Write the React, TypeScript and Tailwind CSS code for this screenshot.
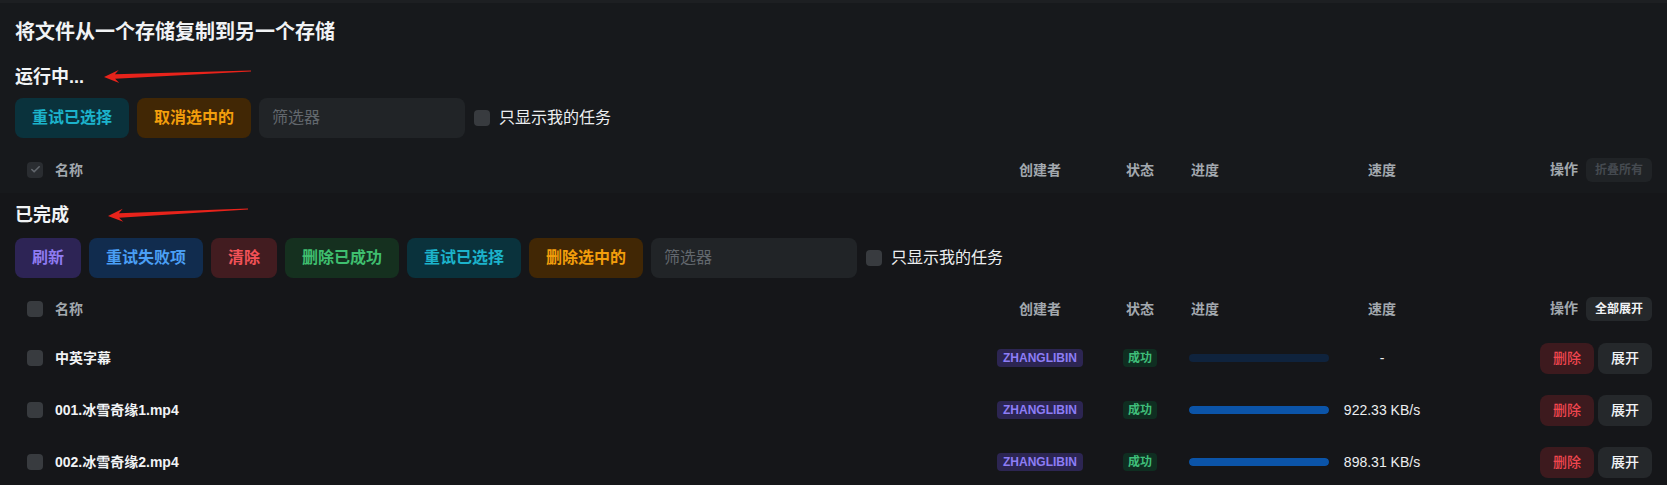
import { Check } from 'lucide-react';

type Tone = 'teal' | 'orange' | 'violet' | 'blue' | 'red' | 'green';

const tones: Record<Tone, string> = {
  teal: 'bg-[#0a323c] text-[#1cb3cb]',
  orange: 'bg-[#412705] text-[#f29e0c]',
  violet: 'bg-[#2d2455] text-[#8f7bf2]',
  blue: 'bg-[#112c4e] text-[#4a9ff5]',
  red: 'bg-[#421c20] text-[#f15257]',
  green: 'bg-[#15301f] text-[#3fbf6f]',
};

const ActionButton = ({ label, tone }: { label: string; tone: Tone }) => (
  <button className={`h-10 px-[17px] rounded-lg text-base font-semibold whitespace-nowrap ${tones[tone]}`}>
    {label}
  </button>
);

const Toolbar = ({ buttons }: { buttons: { label: string; tone: Tone }[] }) => (
  <div className="flex items-center gap-2">
    {buttons.map((b) => (
      <ActionButton key={b.label} label={b.label} tone={b.tone} />
    ))}
    <input
      placeholder="筛选器"
      className="w-[206px] h-10 rounded-lg bg-[#212427] px-[13px] text-base text-white outline-none placeholder:text-[#62676d]"
    />
    <label className="flex items-center gap-[9px] ml-px">
      <span className="w-4 h-4 rounded-[4px] bg-[#383b3f]" />
      <span className="text-base text-[#eceef0]">只显示我的任务</span>
    </label>
  </div>
);

const cols = 'grid grid-cols-[40px_1fr_112px_88px_150px_96px_222px] items-center';

const Box = ({ checked, dim }: { checked?: boolean; dim?: boolean }) => (
  <span
    className={`w-4 h-4 rounded-[4px] flex items-center justify-center ${dim ? 'bg-[#2a2d31]' : 'bg-[#383b3f]'}`}
  >
    {checked && <Check size={11} strokeWidth={3.5} className="text-[#62676d]" />}
  </span>
);

const HeaderRow = ({ running }: { running?: boolean }) => (
  <div className={`${cols} h-[47px] text-sm font-bold text-[#a2a8ae]`}>
    <div className="pl-3">
      <Box checked={running} dim={running} />
    </div>
    <div>名称</div>
    <div className="text-center">创建者</div>
    <div className="text-center">状态</div>
    <div className="pl-[7px]">进度</div>
    <div className="text-center">速度</div>
    <div className="flex items-center justify-end gap-2">
      <span className="-mt-0.5">操作</span>
      {running ? (
        <button className="h-6 px-[9px] rounded-md bg-[#202326] text-xs text-[#454a50]">折叠所有</button>
      ) : (
        <button className="h-6 px-[9px] rounded-md bg-[#25282b] text-xs font-bold text-[#f1f3f5]">全部展开</button>
      )}
    </div>
  </div>
);

type Task = { name: string; progress: number; speed: string };

const tasks: Task[] = [
  { name: '中英字幕', progress: 0, speed: '-' },
  { name: '001.冰雪奇缘1.mp4', progress: 100, speed: '922.33 KB/s' },
  { name: '002.冰雪奇缘2.mp4', progress: 100, speed: '898.31 KB/s' },
];

const TaskRow = ({ task }: { task: Task }) => (
  <div className={`${cols} h-[52px]`}>
    <div className="pl-3">
      <Box />
    </div>
    <div className="text-sm font-bold text-[#f1f3f5]">{task.name}</div>
    <div className="flex justify-center">
      <span className="h-[18px] px-1.5 rounded-[4px] bg-[#2c2552] text-xs font-bold leading-[18px] text-[#8d7df6]">
        ZHANGLIBIN
      </span>
    </div>
    <div className="flex justify-center">
      <span className="h-[18px] px-[5px] rounded-[4px] bg-[#0f2e21] text-xs font-bold leading-[18px] text-[#3fbf7a]">
        成功
      </span>
    </div>
    <div className="pl-[5px]">
      <div className="w-[140px] h-2 rounded-full bg-[#0f233d] overflow-hidden">
        <div className="h-full rounded-full bg-[#0b54a8]" style={{ width: `${task.progress}%` }} />
      </div>
    </div>
    <div className="text-center text-sm text-[#eceef0]">{task.speed}</div>
    <div className="flex justify-end gap-1">
      <button className="h-[31px] w-[54px] rounded-lg bg-[#3d1a1e] text-sm font-medium text-[#f0464f]">删除</button>
      <button className="h-[31px] w-[54px] rounded-lg bg-[#25282b] text-sm font-medium text-[#f1f3f5]">展开</button>
    </div>
  </div>
);

type Pt = [number, number];

const arrow = (tip: Pt, tail: Pt) => {
  const dx = tail[0] - tip[0];
  const dy = tail[1] - tip[1];
  const len = Math.hypot(dx, dy);
  const u: Pt = [dx / len, dy / len];
  const n: Pt = [-u[1], u[0]];
  const at = (d: number, w: number): string =>
    `${tip[0] + u[0] * d + n[0] * w},${tip[1] + u[1] * d + n[1] * w}`;
  return [at(0, 0), at(15, 6.5), at(11, 2.2), at(len, 0.4), at(len, -0.4), at(11, -2.2), at(15, -6.5)].join(' ');
};

export default function App() {
  return (
    <div className="relative min-h-screen bg-[#151619] font-['Liberation_Sans','Noto_Sans_CJK_SC',sans-serif]">
      <div className="h-[3px] bg-[#1d1f22]" />
      <div className="bg-[#17191c] px-[15px] pt-[15px]">
        <h1 className="text-[20px] leading-7 font-bold text-[#f1f3f5]">将文件从一个存储复制到另一个存储</h1>
        <h2 className="mt-[17px] text-lg leading-7 font-bold text-[#f1f3f5]">运行中...</h2>
        <div className="mt-[7px]">
          <Toolbar
            buttons={[
              { label: '重试已选择', tone: 'teal' },
              { label: '取消选中的', tone: 'orange' },
            ]}
          />
        </div>
        <div className="mt-2">
          <HeaderRow running />
        </div>
      </div>
      <div className="px-[15px] pt-2">
        <h2 className="text-lg leading-7 font-bold text-[#f1f3f5]">已完成</h2>
        <div className="mt-[9px]">
          <Toolbar
            buttons={[
              { label: '刷新', tone: 'violet' },
              { label: '重试失败项', tone: 'blue' },
              { label: '清除', tone: 'red' },
              { label: '删除已成功', tone: 'green' },
              { label: '重试已选择', tone: 'teal' },
              { label: '删除选中的', tone: 'orange' },
            ]}
          />
        </div>
        <div className="mt-[7px]">
          <HeaderRow />
          {tasks.map((t) => (
            <TaskRow key={t.name} task={t} />
          ))}
        </div>
      </div>
      <svg className="absolute left-0 top-0 pointer-events-none" width={1667} height={485}>
        <polygon points={arrow([104, 77], [251, 71])} fill="#e8231b" />
        <polygon points={arrow([108, 216], [248, 209])} fill="#e8231b" />
      </svg>
    </div>
  );
}
